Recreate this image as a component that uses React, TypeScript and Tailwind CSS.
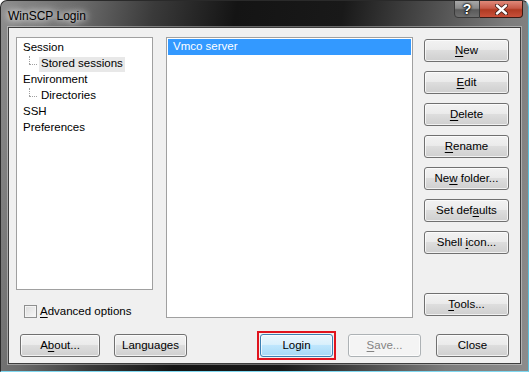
import React from "react";

const font = "font-['Segoe_UI','Liberation_Sans',Arial,sans-serif]";

function U({ children }: { children: React.ReactNode }) {
  return <span className="underline underline-offset-[2px]">{children}</span>;
}

type BtnProps = {
  children: React.ReactNode;
  w?: string;
  kind?: "normal" | "default" | "disabled";
};

function Btn({ children, w = "w-[85px]", kind = "normal" }: BtnProps) {
  const look =
    kind === "default"
      ? "border-[#3c7fb1] bg-[linear-gradient(#eaf6fd_0%,#d9f0fc_45%,#bee6fd_50%,#a7d9f5_100%)] text-black"
      : kind === "disabled"
        ? "border-[#adb2b5] bg-[#f4f4f4] text-[#838383]"
        : "border-[#707070] bg-[linear-gradient(#f2f2f2_0%,#ebebeb_45%,#dddddd_50%,#cfcfcf_100%)] text-black";
  return (
    <div
      className={`${w} h-[23px] shrink-0 rounded-[3px] border ${look} flex items-center justify-center text-[11.5px] leading-none shadow-[inset_0_0_0_1px_rgba(255,255,255,0.7)]`}
    >
      <span>{children}</span>
    </div>
  );
}

function TreeRow({ label, child, selected }: { label: string; child?: boolean; selected?: boolean }) {
  return (
    <div className="h-[16px] flex items-center">
      {child && (
        <div className="relative w-[18px] h-full shrink-0">
          <div className="absolute left-[8px] top-0 h-[8px] border-l border-dotted border-[#a0a0a0]" />
          <div className="absolute left-[8px] top-[8px] w-[8px] border-t border-dotted border-[#a0a0a0]" />
        </div>
      )}
      <span className={`h-[15px] flex items-center px-[2px] ${selected ? "bg-[#e8e8e8]" : ""}`}>{label}</span>
    </div>
  );
}

export default function App() {
  const side = ["New", "Edit", "Delete", "Rename", "New folder", "Set defaults", "Shell icon"];
  const labels: Record<string, React.ReactNode> = {
    New: (<><U>N</U>ew</>),
    Edit: (<><U>E</U>dit</>),
    Delete: (<><U>D</U>elete</>),
    Rename: (<><U>R</U>ename</>),
    "New folder": (<>Ne<U>w</U> folder...</>),
    "Set defaults": (<>Set def<U>a</U>ults</>),
    "Shell icon": (<>Shell <U>i</U>con...</>),
  };

  return (
    <div
      className={`${font} w-[529px] h-[372px] overflow-hidden rounded-t-[7px] flex flex-col bg-[linear-gradient(100deg,#8e8e8e_0%,#6a6a6a_14%,#3a3a3a_26%,#141414_40%,#191919_58%,#4a4a4a_72%,#7c7c7c_86%,#8c8c8c_100%)] border border-[#2a2a2a] border-b-[#7fd8f0] border-r-[#5cc0dc]`}
    >
      {/* title bar */}
      <div className="h-[26px] flex items-start justify-between shrink-0">
        <div className="pl-[7px] pt-[6px] text-[12px] text-black [text-shadow:0_0_6px_#ffffff,0_0_10px_#ffffff]">
          WinSCP Login
        </div>
        <div className="flex mr-[5px] -mt-px">
          <div className="w-[26px] h-[18px] rounded-bl-[4px] border border-[#3a3a3a] bg-[linear-gradient(#a8a8a8_0%,#8a8a8a_45%,#5a5a5a_55%,#6e6e6e_100%)] flex items-center justify-center text-white font-bold text-[14px] leading-none [text-shadow:0_0_1px_#000,0_0_2px_#000,0_0_3px_#000]">
            ?
          </div>
          <div className="w-[43px] h-[18px] rounded-br-[4px] border border-l-0 border-[#3a1a14] bg-[linear-gradient(#e08a7a_0%,#c75a48_45%,#b03a22_55%,#c8503a_100%)] flex items-center justify-center">
            <svg width="13" height="11" viewBox="0 0 13 11">
              <path d="M2 1.5 L11 9.5 M11 1.5 L2 9.5" stroke="#3a1a14" strokeWidth="4" strokeLinecap="round" />
              <path d="M2 1.5 L11 9.5 M11 1.5 L2 9.5" stroke="#ffffff" strokeWidth="2.4" strokeLinecap="round" />
            </svg>
          </div>
        </div>
      </div>

      {/* client area */}
      <div className="mx-[7px] mb-[7px] flex-1 border border-[#3e3e3e] bg-[#f0f0f0] text-[11.5px] text-black shadow-[0_0_0_1px_rgba(255,255,255,0.35)]">
        <div className="flex h-[290px] pt-[9px] pl-[7px]">
          {/* left column */}
          <div className="w-[137px] h-[281px] flex flex-col shrink-0">
            <div className="h-[259px] bg-white border border-[#a0a0a0] pt-[2px] pl-[4px]">
              <TreeRow label="Session" />
              <TreeRow label="Stored sessions" child selected />
              <TreeRow label="Environment" />
              <TreeRow label="Directories" child />
              <TreeRow label="SSH" />
              <TreeRow label="Preferences" />
            </div>
            <div className="flex items-center mt-[14px] ml-[8px] gap-[3px] leading-[14px]">
              <div className="w-[13px] h-[13px] border border-[#8e8f8f] bg-[linear-gradient(135deg,#dcdcdc,#f8f8f8)] shadow-[inset_0_0_0_1px_#f4f4f4]" />
              <span>
                <U>A</U>dvanced options
              </span>
            </div>
          </div>

          {/* session list */}
          <div className="ml-[13px] w-[247px] h-[281px] shrink-0 bg-white border border-[#a0a0a0] p-px">
            <div className="h-[16px] bg-[#3399ff] text-white flex items-center pl-[5px]">Vmco server</div>
          </div>

          {/* right buttons */}
          <div className="ml-[11px] h-[281px] flex flex-col pt-[2px]">
            <div className="flex flex-col gap-[9px]">
              {side.map((s) => (
                <Btn key={s}>{labels[s]}</Btn>
              ))}
            </div>
            <div className="mt-auto mb-[2px]">
              <Btn>
                <U>T</U>ools...
              </Btn>
            </div>
          </div>
        </div>

        {/* bottom row */}
        <div className="flex items-start mt-[16px] pl-[11px]">
          <Btn w="w-[80px]">
            A<U>b</U>out...
          </Btn>
          <div className="ml-[14px]">
            <Btn w="w-[73px]">Languages</Btn>
          </div>
          <div className="ml-[70px] -mt-[3px] border-2 border-[#e0141e] p-px">
            <Btn w="w-[73px]" kind="default">
              Login
            </Btn>
          </div>
          <div className="ml-[12px]">
            <Btn w="w-[73px]" kind="disabled">
              <U>S</U>ave...
            </Btn>
          </div>
          <div className="ml-[15px]">
            <Btn w="w-[73px]">Close</Btn>
          </div>
        </div>
      </div>
    </div>
  );
}
